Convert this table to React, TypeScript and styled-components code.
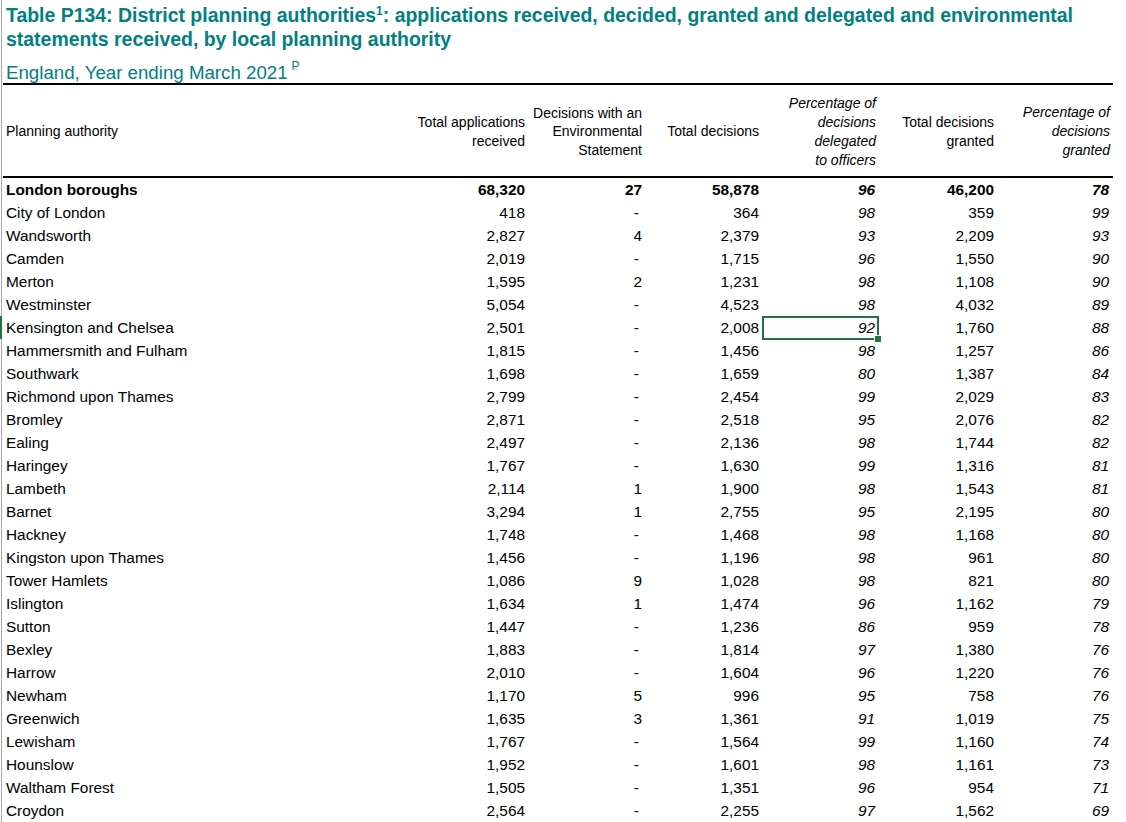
import styled, { createGlobalStyle } from 'styled-components';

const GlobalStyle = createGlobalStyle`
  body {
    margin: 0;
    background: #ffffff;
    font-family: "Liberation Sans", Arial, sans-serif;
    color: #000000;
  }
`;

const Sheet = styled.div`
  margin-left: 1px;
  border-left: 1px solid #a6a6a6;
  padding-left: 1px;
  width: 1115px;
  min-height: 822px;
`;

const Title = styled.h1`
  margin: 0;
  padding: 3px 0 0 3px;
  font-size: 19.45px;
  line-height: 24px;
  font-weight: bold;
  color: #00807f;
  white-space: nowrap;
`;

const Sup = styled.sup`
  font-size: 12px;
  line-height: 0;
  vertical-align: 7px;
`;

const Subtitle = styled.div`
  box-sizing: border-box;
  height: 32px;
  padding: 11px 0 0 3px;
  font-size: 18.7px;
  line-height: 22px;
  color: #00807f;
`;

const SubSup = styled.sup`
  font-size: 12px;
  line-height: 0;
  margin-left: 4px;
  vertical-align: 9px;
`;

const Table = styled.table`
  border-collapse: separate;
  border-spacing: 0;
  table-layout: fixed;
  width: 1110px;
`;

const HeadCell = styled.th<{ $italic?: boolean; $left?: boolean }>`
  box-sizing: border-box;
  height: 95px;
  padding: 2px 3px 0 3px;
  border-top: 2px solid #000;
  border-bottom: 2px solid #000;
  font-size: 14px;
  line-height: ${(p) => (p.$italic ? '19px' : '18.5px')};
  font-weight: normal;
  font-style: ${(p) => (p.$italic ? 'italic' : 'normal')};
  text-align: ${(p) => (p.$left ? 'left' : 'right')};
  vertical-align: middle;
  white-space: nowrap;
`;

const Row = styled.tr`
  height: 23px;
`;

const NameCell = styled.td<{ $bold?: boolean; $active?: boolean }>`
  position: relative;
  padding: 0 3px;
  height: 23px;
  font-size: 15.4px;
  line-height: 22px;
  font-weight: ${(p) => (p.$bold ? 'bold' : 'normal')};
  white-space: nowrap;
  &::before {
    content: '';
    display: ${(p) => (p.$active ? 'block' : 'none')};
    position: absolute;
    left: -3px;
    top: 0;
    bottom: 0;
    width: 2px;
    background: #217346;
  }
`;

const NumCell = styled.td<{ $bold?: boolean; $italic?: boolean; $dash?: boolean }>`
  position: relative;
  padding: 0 ${(p) => (p.$dash ? '6px' : p.$italic ? '4px' : '3px')} 0 0;
  height: 23px;
  font-size: 15.4px;
  line-height: 22px;
  text-align: right;
  font-weight: ${(p) => (p.$bold ? 'bold' : 'normal')};
  font-style: ${(p) => (p.$italic ? 'italic' : 'normal')};
  white-space: nowrap;
`;

const Selection = styled.div`
  position: absolute;
  left: 0;
  top: 0;
  right: 0;
  bottom: -1px;
  border: 2px solid #217346;
  pointer-events: none;
`;

const Handle = styled.div`
  position: absolute;
  right: -5px;
  bottom: -5px;
  width: 6px;
  height: 6px;
  background: #217346;
  border: 1px solid #ffffff;
`;

type Entry = [string, string, string, string, string, string, string];

const rows: Entry[] = [
  ['London boroughs', '68,320', '27', '58,878', '96', '46,200', '78'],
  ['City of London', '418', '-', '364', '98', '359', '99'],
  ['Wandsworth', '2,827', '4', '2,379', '93', '2,209', '93'],
  ['Camden', '2,019', '-', '1,715', '96', '1,550', '90'],
  ['Merton', '1,595', '2', '1,231', '98', '1,108', '90'],
  ['Westminster', '5,054', '-', '4,523', '98', '4,032', '89'],
  ['Kensington and Chelsea', '2,501', '-', '2,008', '92', '1,760', '88'],
  ['Hammersmith and Fulham', '1,815', '-', '1,456', '98', '1,257', '86'],
  ['Southwark', '1,698', '-', '1,659', '80', '1,387', '84'],
  ['Richmond upon Thames', '2,799', '-', '2,454', '99', '2,029', '83'],
  ['Bromley', '2,871', '-', '2,518', '95', '2,076', '82'],
  ['Ealing', '2,497', '-', '2,136', '98', '1,744', '82'],
  ['Haringey', '1,767', '-', '1,630', '99', '1,316', '81'],
  ['Lambeth', '2,114', '1', '1,900', '98', '1,543', '81'],
  ['Barnet', '3,294', '1', '2,755', '95', '2,195', '80'],
  ['Hackney', '1,748', '-', '1,468', '98', '1,168', '80'],
  ['Kingston upon Thames', '1,456', '-', '1,196', '98', '961', '80'],
  ['Tower Hamlets', '1,086', '9', '1,028', '98', '821', '80'],
  ['Islington', '1,634', '1', '1,474', '96', '1,162', '79'],
  ['Sutton', '1,447', '-', '1,236', '86', '959', '78'],
  ['Bexley', '1,883', '-', '1,814', '97', '1,380', '76'],
  ['Harrow', '2,010', '-', '1,604', '96', '1,220', '76'],
  ['Newham', '1,170', '5', '996', '95', '758', '76'],
  ['Greenwich', '1,635', '3', '1,361', '91', '1,019', '75'],
  ['Lewisham', '1,767', '-', '1,564', '99', '1,160', '74'],
  ['Hounslow', '1,952', '-', '1,601', '98', '1,161', '73'],
  ['Waltham Forest', '1,505', '-', '1,351', '96', '954', '71'],
  ['Croydon', '2,564', '-', '2,255', '97', '1,562', '69'],
];

const widths = [407, 118, 117, 117, 117, 118, 116];
const italicCols = [4, 6];
const selectedRow = 6;
const selectedCol = 4;

function App() {
  return (
    <>
      <GlobalStyle />
      <Sheet>
        <Title>
          Table P134: District planning authorities<Sup>1</Sup>: applications received, decided, granted and delegated and environmental
          <br />
          statements received, by local planning authority
        </Title>
        <Subtitle>
          England, Year ending March 2021
          <SubSup>P</SubSup>
        </Subtitle>
        <Table>
          <colgroup>
            {widths.map((w, i) => <col key={i} style={{ width: w }} />)}
          </colgroup>
          <thead>
            <tr>
              <HeadCell $left>Planning authority</HeadCell>
              <HeadCell>Total applications<br />received</HeadCell>
              <HeadCell>Decisions with an<br />Environmental<br />Statement</HeadCell>
              <HeadCell>Total decisions</HeadCell>
              <HeadCell $italic>Percentage of<br />decisions<br />delegated<br />to officers</HeadCell>
              <HeadCell>Total decisions<br />granted</HeadCell>
              <HeadCell $italic>Percentage of<br />decisions<br />granted</HeadCell>
            </tr>
          </thead>
          <tbody>
            {rows.map((row, r) => (
              <Row key={row[0]}>
                <NameCell $bold={r === 0} $active={r === selectedRow}>{row[0]}</NameCell>
                {row.slice(1).map((value, c) => (
                  <NumCell
                    key={c}
                    $bold={r === 0}
                    $italic={italicCols.includes(c + 1)}
                    $dash={value === '-'}
                  >
                    {value}
                    {r === selectedRow && c + 1 === selectedCol && (
                      <Selection>
                        <Handle />
                      </Selection>
                    )}
                  </NumCell>
                ))}
              </Row>
            ))}
          </tbody>
        </Table>
      </Sheet>
    </>
  );
}

export default App;
